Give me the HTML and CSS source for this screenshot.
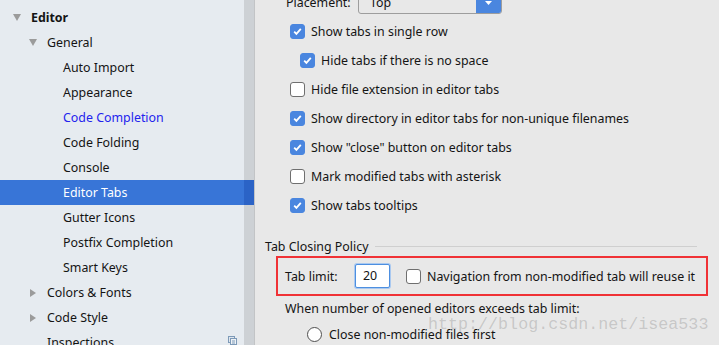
FILE: index.html
```html
<!DOCTYPE html>
<html lang="en">

<head>
    <meta charset="UTF-8">
    <title>Settings - Editor Tabs</title>
    <link rel="stylesheet" href="styles.css">
</head>

<body>
    <div class="window">
        <!-- 左侧设置树 -->
        <div class="sidebar">
            <ul class="tree">
                <li class="node lvl0 bold modified">Keymap</li>
                <li class="node lvl0 bold"><i class="arrow down"></i>Editor</li>
                <li class="node lvl1"><i class="arrow down"></i>General</li>
                <li class="node lvl2">Auto Import</li>
                <li class="node lvl2">Appearance</li>
                <li class="node lvl2 modified">Code Completion</li>
                <li class="node lvl2">Code Folding</li>
                <li class="node lvl2">Console</li>
                <li class="node lvl2 selected">Editor Tabs</li>
                <li class="node lvl2">Gutter Icons</li>
                <li class="node lvl2">Postfix Completion</li>
                <li class="node lvl2">Smart Keys</li>
                <li class="node lvl1"><i class="arrow right"></i>Colors &amp; Fonts</li>
                <li class="node lvl1"><i class="arrow right"></i>Code Style</li>
                <li class="node lvl1">Inspections
                    <svg class="copy_icon" width="9" height="9" viewBox="0 0 9 9">
                        <rect x="0.5" y="0.5" width="6" height="6" fill="#dfe6ee" stroke="#7d9ab8" />
                        <rect x="2.5" y="2.5" width="6" height="6" fill="#eef2f6" stroke="#7d9ab8" />
                        <path d="M4 5h3M4 7h3" stroke="#7d9ab8" />
                    </svg>
                </li>
            </ul>
        </div>
        <div class="scroll_track"></div>

        <!-- 右侧选项面板 -->
        <div class="panel">
            <div class="row">
                <span class="label_right">Placement:</span>
                <div class="combo">
                    <span class="combo_text">Top</span>
                    <span class="combo_btn">
                        <svg width="9" height="6" viewBox="0 0 9 6"><path d="M1 1l3.5 4 3.5-4z" fill="#fff" /></svg>
                    </span>
                </div>
            </div>
            <div class="row"><span class="check on"></span>Show tabs in single row</div>
            <div class="row indent"><span class="check on"></span>Hide tabs if there is no space</div>
            <div class="row"><span class="check"></span>Hide file extension in editor tabs</div>
            <div class="row"><span class="check on"></span>Show directory in editor tabs for non-unique filenames</div>
            <div class="row"><span class="check on"></span>Show "close" button on editor tabs</div>
            <div class="row"><span class="check"></span>Mark modified tabs with asterisk</div>
            <div class="row"><span class="check on"></span>Show tabs tooltips</div>

            <div class="section_title">
                <span>Tab Closing Policy</span>
                <span class="section_line"></span>
            </div>

            <div class="highlight_box">
                <span class="tab_label">Tab limit:</span>
                <span class="num_input">20</span>
                <span class="check"></span>Navigation from non-modified tab will reuse it
            </div>

            <div class="hint">When number of opened editors exceeds tab limit:</div>
            <div class="radio_row"><span class="radio"></span>Close non-modified files first</div>

            <div class="watermark">http://blog.csdn.net/isea533</div>
        </div>
    </div>
</body>

</html>
```

FILE: styles.css
```css
* {
    margin: 0;
    padding: 0;
    box-sizing: border-box;
}

li {
    list-style: none;
}

body {
    width: 719px;
    height: 345px;
    overflow: hidden;
    font-family: "Noto Sans", "Open Sans", sans-serif;
    font-size: 12.4px;
    color: #141414;
    background-color: #e8e8e8;
}

.window {
    display: flex;
    height: 345px;
}

/* 左侧树 */
.sidebar {
    width: 244px;
    flex-shrink: 0;
    background-color: #e6ebf0;
}

.tree {
    margin-top: -20px;
    width: 254px;
}

.node {
    position: relative;
    display: flex;
    align-items: center;
    height: 25px;
    white-space: nowrap;
}

.lvl0 {
    padding-left: 31px;
}

.lvl1 {
    padding-left: 47px;
}

.lvl2 {
    padding-left: 63px;
}

.bold {
    font-weight: bold;
}

.modified {
    color: #2323ee;
}

.selected {
    color: #fff;
    background: linear-gradient(to right, #3875d7 244px, #2b63c6 244px);
}

.arrow {
    position: absolute;
    width: 0;
    height: 0;
}

.lvl0 .arrow {
    left: 13px;
}

.lvl1 .arrow {
    left: 29px;
}

.arrow.down {
    top: 9px;
    border-left: 4.5px solid transparent;
    border-right: 4.5px solid transparent;
    border-top: 7px solid #9b9b9b;
}

.arrow.right {
    top: 9px;
    left: 30px;
    border-top: 4px solid transparent;
    border-bottom: 4px solid transparent;
    border-left: 6px solid #9b9b9b;
}

.copy_icon {
    position: absolute;
    left: 228px;
    top: 6px;
}

.scroll_track {
    width: 11px;
    flex-shrink: 0;
    background-color: #cdd1d5;
    border-right: 1px solid #c2c4c6;
}

/* 右侧面板 */
.panel {
    position: relative;
    flex: 1;
    margin-top: -12px;
    padding-left: 35px;
}

.row {
    display: flex;
    align-items: center;
    height: 29px;
    white-space: nowrap;
}

.row.indent {
    padding-left: 10px;
}

.label_right {
    width: 72px;
    margin-left: -4px;
}

.combo {
    display: flex;
    align-items: center;
    width: 144px;
    height: 23px;
    border: 1px solid #9d9d9d;
    border-radius: 3px;
    overflow: hidden;
}

.combo_text {
    flex: 1;
    padding-left: 11px;
}

.combo_btn {
    display: flex;
    align-items: center;
    justify-content: center;
    width: 25px;
    height: 100%;
    background-color: #4a86df;
}

.check {
    flex-shrink: 0;
    width: 15px;
    height: 15px;
    margin-right: 6px;
    background-color: #fff;
    border: 1px solid #6f6f6f;
    border-radius: 3px;
}

.check.on {
    border-color: #4a86df;
    background: #4a86df url("data:image/svg+xml;utf8,<svg xmlns='http://www.w3.org/2000/svg' width='13' height='13' viewBox='0 0 13 13'><path d='M3.2 6.6l2.2 2.3 4.4-5' fill='none' stroke='white' stroke-width='1.8'/></svg>") no-repeat center;
}

.section_title {
    display: flex;
    align-items: center;
    height: 18px;
    margin-top: 17px;
    margin-left: -25px;
    margin-right: 22px;
}

.section_line {
    flex: 1;
    height: 1px;
    margin-left: 6px;
    background-color: #cfcfcf;
}

.highlight_box {
    display: flex;
    align-items: center;
    width: 432px;
    height: 40px;
    margin-top: 1px;
    margin-left: -14px;
    padding-left: 7px;
    border: 2px solid #f03236;
    white-space: nowrap;
}

.tab_label {
    width: 70px;
}

.num_input {
    width: 35px;
    height: 24px;
    line-height: 22px;
    margin-right: 16px;
    padding-left: 7px;
    background-color: #fff;
    border: 1px solid #4d8fe0;
    box-shadow: 0 0 0 1px #aac9f0;
    border-radius: 2px;
}

.hint {
    height: 18px;
    line-height: 18px;
    margin-top: 4px;
    margin-left: -5px;
}

.radio_row {
    display: flex;
    align-items: center;
    height: 18px;
    margin-top: 7px;
    margin-left: 17px;
}

.radio {
    width: 15px;
    height: 15px;
    margin-right: 7px;
    background-color: #fff;
    border: 1px solid #4f4f4f;
    border-radius: 50%;
}

/* 水印，盖在内容上方 */
.watermark {
    position: absolute;
    left: 173px;
    top: 327px;
    font-family: "Liberation Mono", monospace;
    font-size: 16.7px;
    color: rgba(120, 120, 120, .3);
}
```
